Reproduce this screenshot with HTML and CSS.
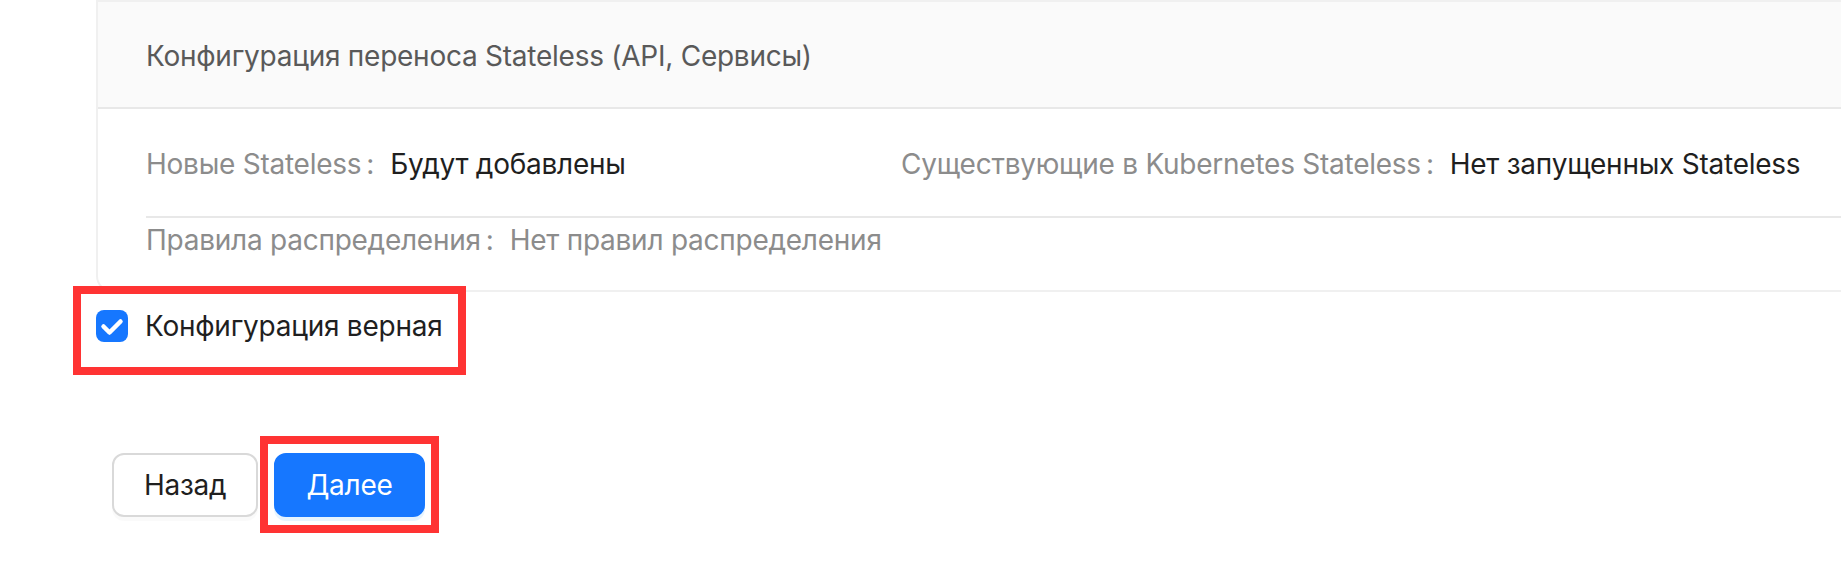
FILE: index.html
```html
<!DOCTYPE html>
<html lang="ru">
<head>
<meta charset="utf-8">
<title>Конфигурация переноса</title>
<link rel="stylesheet" href="styles.css">
</head>
<body>
<div class="page">
  <section class="card">
    <header class="card-head">Конфигурация переноса Stateless (API, Сервисы)</header>
    <div class="card-body">
      <div class="desc-row">
        <div class="item"><span class="label">Новые Stateless</span><span class="colon">:</span><span class="value">Будут добавлены</span></div>
        <div class="item"><span class="label">Существующие в Kubernetes Stateless</span><span class="colon">:</span><span class="value">Нет запущенных Stateless</span></div>
      </div>
      <div class="desc-row divided">
        <div class="item"><span class="label">Правила распределения</span><span class="colon">:</span><span class="value muted">Нет правил распределения</span></div>
      </div>
    </div>
  </section>

  <label class="check-row">
    <span class="checkbox"><svg viewBox="0 0 32 32" width="32" height="32"><polyline points="7.5,16.5 13.5,22.5 24.5,11.5" fill="none" stroke="#fff" stroke-width="4.5" stroke-linecap="round" stroke-linejoin="round"/></svg></span>
    <span class="check-label">Конфигурация верная</span>
    <span class="mark mark-check"></span>
  </label>

  <div class="actions">
    <button class="btn">Назад</button>
    <span class="btn-wrap">
      <button class="btn primary">Далее</button>
      <span class="mark mark-btn"></span>
    </span>
  </div>
</div>
</body>
</html>
```
FILE: styles.css
```css
html {
  overflow: hidden;
  background: #ffffff;
}
body {
  margin: 0;
  padding: 0;
  min-height: 588px;
  background: #ffffff;
  font-family: "Inter", "Noto Sans", sans-serif;
  font-size: 28px;
  line-height: 44px;
  letter-spacing: -0.25px;
  color: #1f1f1f;
}
.page {
  padding-left: 96px;
  width: 1841px;
  box-sizing: border-box;
  overflow: hidden;
  min-height: 588px;
}
.card {
  width: 1900px;
  border: 2px solid #f0f0f0;
  border-radius: 0 0 16px 16px;
  background: #fff;
}
.card-head {
  background: #fafafa;
  color: #595959;
  padding: 32px 48px 29px;
  border-bottom: 2px solid #e8e8e8;
}
.card-body {
  padding: 33px 0 0 48px;
}
.desc-row {
  display: grid;
  grid-template-columns: 755px 1fr;
  padding-bottom: 30px;
}
.desc-row.divided {
  border-top: 2px solid #e8e8e8;
  padding-bottom: 28px;
}
.item {
  display: flex;
  align-items: baseline;
  white-space: nowrap;
}
.label {
  color: #8c8c8c;
}
.colon {
  color: #8c8c8c;
  margin: 0 16px 0 5px;
}
.value {
  color: #1f1f1f;
}
.value.muted {
  color: #8c8c8c;
}
.check-row {
  position: relative;
  display: inline-flex;
  align-items: center;
  margin-top: 12px;
  color: #1f1f1f;
}
.checkbox {
  width: 32px;
  height: 32px;
  border-radius: 8px;
  background: #1677ff;
  display: flex;
  margin-right: 17px;
}
.checkbox svg {
  display: block;
}
.actions {
  display: flex;
  align-items: flex-start;
  gap: 16px;
  margin-top: 99px;
  padding-left: 16px;
}
.btn-wrap {
  position: relative;
  display: block;
}
.btn {
  display: block;
  height: 64px;
  padding: 0 30px;
  font-family: inherit;
  font-size: 28px;
  letter-spacing: -0.25px;
  border: 2px solid #d9d9d9;
  border-radius: 12px;
  background: #fff;
  color: #1f1f1f;
  box-shadow: 0 4px 0 rgba(0, 0, 0, 0.02);
}
.btn.primary {
  background: #1677ff;
  border-color: #1677ff;
  color: #fff;
  box-shadow: 0 4px 0 rgba(5, 145, 255, 0.1);
}
.mark {
  position: absolute;
  border: 8px solid #ff3333;
  box-sizing: border-box;
  pointer-events: none;
}
.mark-check {
  left: -23px;
  top: -18px;
  width: 393px;
  height: 89px;
}
.mark-btn {
  left: -14px;
  top: -17px;
  width: 179px;
  height: 97px;
}
```
